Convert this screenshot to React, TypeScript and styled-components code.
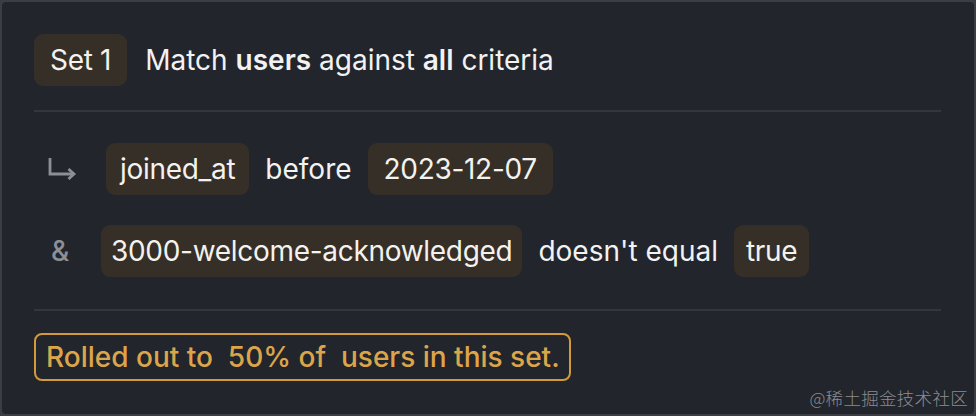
import React from 'react';
import styled, { createGlobalStyle } from 'styled-components';

const GlobalStyle = createGlobalStyle`
  html, body {
    margin: 0;
    padding: 0;
    background: #3a3d44;
  }
  body {
    font-family: Inter, "Noto Sans", sans-serif;
  }
`;

const Card = styled.div`
  box-sizing: border-box;
  width: 976px;
  height: 416px;
  background: #22252c;
  border: 2px solid #3b3e45;
  border-radius: 6px;
  padding: 32px 33px 0 32px;
  display: flex;
  flex-direction: column;
  color: #f2f2f2;
  font-size: 28px;
  position: relative;
`;

const Header = styled.div`
  display: flex;
  align-items: center;
  gap: 18px;
  padding-bottom: 24px;
  border-bottom: 2px solid #33363d;
`;

const Chip = styled.span<{ $pad?: number }>`
  display: inline-flex;
  align-items: center;
  height: 52px;
  padding: 0 ${p => p.$pad ?? 11}px;
  border-radius: 9px;
  background: #352f27;
  color: #f4f2ee;
  white-space: nowrap;
  letter-spacing: -0.3px;
`;

const Title = styled.span`
  white-space: nowrap;
  b {
    font-weight: 600;
  }
`;

const Criteria = styled.div`
  display: flex;
  flex-direction: column;
  gap: 30px;
  padding: 31px 0 32px;
  border-bottom: 2px solid #33363d;
`;

const Row = styled.div`
  display: flex;
  align-items: center;
  gap: 15px;
`;

const Lead = styled.span<{ $indent: number; $width: number }>`
  box-sizing: border-box;
  width: ${p => p.$width}px;
  margin-left: ${p => p.$indent}px;
  margin-right: -15px;
  display: flex;
  align-items: center;
  color: #8d8f94;
  font-weight: 500;
`;

const Word = styled.span`
  white-space: nowrap;
  padding: 0 1px;
`;

const Footer = styled.div`
  padding-top: 22px;
  display: flex;
`;

const Rollout = styled.div`
  border: 2px solid #d39a3c;
  border-radius: 8px;
  color: #dca54a;
  padding: 0 9px 0 10px;
  height: 44px;
  display: flex;
  align-items: center;
  white-space: pre;
  font-weight: 500;
`;

const Watermark = styled.span`
  position: absolute;
  right: 6px;
  bottom: 4px;
  font-family: "Noto Sans CJK SC", sans-serif;
  font-size: 17.5px;
  font-weight: 300;
  color: #8a8c91;
  letter-spacing: 0.3px;
`;

const ArrowIcon = () => (
  <svg width="30" height="22" viewBox="0 0 30 22" fill="none">
    <path d="M2 0 V16 H25" stroke="#8d8f94" strokeWidth="2.8" />
    <path d="M20.5 11 L26 16 L20.5 21" stroke="#8d8f94" strokeWidth="2.8" strokeLinejoin="miter" />
  </svg>
);

export default function App() {
  return (
    <>
      <GlobalStyle />
      <Card>
        <Header>
          <Chip $pad={16}>Set 1</Chip>
          <Title>
            Match <b>users</b> against <b>all</b> criteria
          </Title>
        </Header>
        <Criteria>
          <Row>
            <Lead $indent={14} $width={58}><ArrowIcon /></Lead>
            <Chip $pad={14}>joined_at</Chip>
            <Word>before</Word>
            <Chip $pad={16}>2023-12-07</Chip>
          </Row>
          <Row>
            <Lead $indent={17} $width={50}>&amp;</Lead>
            <Chip $pad={10}>3000-welcome-acknowledged</Chip>
            <Word>doesn't equal</Word>
            <Chip $pad={12}>true</Chip>
          </Row>
        </Criteria>
        <Footer>
          <Rollout>{'Rolled out to  50% of  users in this set.'}</Rollout>
        </Footer>
        <Watermark>@稀土掘金技术社区</Watermark>
      </Card>
    </>
  );
}
